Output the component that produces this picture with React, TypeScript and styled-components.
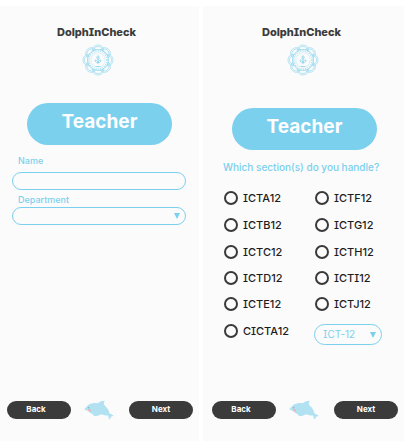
import React from "react";
import styled, { createGlobalStyle } from "styled-components";

const blue = "#7bd0ed";
const ink = "#3b3b3b";

const GlobalStyle = createGlobalStyle`
  *, *::before, *::after { box-sizing: border-box; }
  body {
    margin: 0;
    background: #fff;
    font-family: Inter, "Liberation Sans", sans-serif;
    font-feature-settings: "cv08" 1;
  }
  button, input, select { font: inherit; font-feature-settings: inherit; }
`;

const Board = styled.main`
  display: grid;
  grid-template-columns: minmax(0, 199fr) minmax(0, 201fr);
  column-gap: 4px;
  min-height: 100vh;
  padding: 6px 7px 5px 0;
`;

const Screen = styled.section<{ $inset?: number }>`
  display: flex;
  flex-direction: column;
  padding-left: ${(p) => p.$inset ?? 0}px;
  background: #fbfbfb;
`;

const Header = styled.header`
  display: flex;
  flex-direction: column;
  align-items: center;
  padding: 19px 6px 0 0;
`;

const Brand = styled.h1`
  margin: 0;
  color: ${ink};
  font-size: 11px;
  line-height: 15px;
  font-weight: 800;
`;

const SealSvg = styled.svg`
  width: 32px;
  height: 32px;
  margin: 4px 0 0 2px;
`;

const RoleButton = styled.button<{ $top: number }>`
  align-self: center;
  width: 73%;
  height: 42px;
  margin-top: ${(p) => p.$top}px;
  padding: 0 0 4px;
  border: 0;
  border-radius: 21px;
  background: ${blue};
  color: #fff;
  font-size: 19px;
  line-height: 24px;
  font-weight: 700;
`;

const Form = styled.form`
  display: flex;
  flex-direction: column;
  padding: 10px 13px 0 12px;
`;

const FieldLabel = styled.label`
  padding-left: 6px;
  color: ${blue};
  font-size: 9px;
  line-height: 12px;
  font-weight: 500;
`;

const TextInput = styled.input`
  width: 100%;
  height: 18px;
  margin: 5px 0 4px;
  padding: 0 10px;
  border: 1px solid ${blue};
  border-radius: 9px;
  background: transparent;
  color: ${blue};
  font-size: 9px;
`;

const SelectWrap = styled.div<{ $height: number }>`
  display: grid;
  align-items: center;
  height: ${(p) => p.$height}px;
  margin-top: 1px;

  > * { grid-area: 1 / 1; }
`;

const Select = styled.select`
  appearance: none;
  width: 100%;
  height: 100%;
  padding: 0 18px 2px 8px;
  border: 1px solid ${blue};
  border-radius: 11px;
  background: transparent;
  color: ${blue};
  font-size: 10px;
`;

const Arrow = styled.svg`
  justify-self: end;
  width: 6px;
  height: 6px;
  margin-right: 6px;
  fill: ${blue};
  pointer-events: none;
`;

const Sections = styled.fieldset`
  margin: 0;
  padding: 10px 14px 0 18px;
  border: 0;
  min-width: 0;
`;

const Question = styled.legend`
  float: left;
  width: 100%;
  padding: 0;
  color: ${blue};
  font-size: 10px;
  line-height: 15px;
  font-weight: 500;
  white-space: nowrap;
`;

const Choices = styled.div`
  clear: both;
  display: grid;
  grid-template-columns: 91fr 76fr;
  grid-template-rows: 27px 27px 27px 26px 26px 27px;
  align-items: center;
  padding-top: 9px;
`;

const Choice = styled.label`
  display: flex;
  align-items: center;
  gap: 5px;
  padding-left: 1px;
  color: #1d1d1d;
  font-size: 11px;
  line-height: 14px;
  font-weight: 500;
`;

const Radio = styled.input`
  appearance: none;
  flex: none;
  width: 14px;
  height: 14px;
  margin: 0;
  border: 2px solid #3a3a3a;
  border-radius: 50%;

  &:checked { background: radial-gradient(#3a3a3a 3px, transparent 4px); }
`;

const StrandPicker = styled.div`
  align-self: start;
  padding: 6px 8px 0 0;
`;

const Footer = styled.footer`
  display: flex;
  align-items: center;
  justify-content: space-between;
  margin-top: auto;
  padding: 0 6px 21px 7px;
`;

const NavButton = styled.button<{ $shift?: number }>`
  width: 64px;
  height: 18px;
  padding: 0 ${(p) => p.$shift ?? 0}px 2px 0;
  border: 0;
  border-radius: 9px;
  background: ${ink};
  color: #fff;
  font-size: 8px;
  line-height: 12px;
  font-weight: 700;
`;

const DolphinSvg = styled.svg`
  width: 30px;
  height: 20px;
  margin-right: 2px;
`;

const petals = Array.from({ length: 8 }, (_, i) => i * 45);

function Seal() {
  return (
    <SealSvg viewBox="0 0 32 32" fill="none" stroke={blue} aria-hidden="true">
      <g strokeWidth=".8" opacity=".65">
        {petals.map((a) => (
          <g key={a} transform={`rotate(${a} 16 16)`}>
            <ellipse cx="16" cy="6.2" rx="5.7" ry="5.2" />
            <ellipse cx="16" cy="7" rx="4.8" ry="4.6" />
          </g>
        ))}
      </g>
      <circle cx="16" cy="16" r="10.5" fill="#fbfbfb" strokeWidth=".7" />
      <circle cx="16" cy="16" r="9" strokeWidth="1.5" strokeDasharray="1 1.2" opacity=".6" />
      <circle cx="16" cy="16" r="7.2" strokeWidth=".5" opacity=".5" />
      <path
        d="M16 12v7.5M16 19c-2-.2-3-1.4-3-3 2 .2 3 1.4 3 3Zm0 0c2-.2 3-1.4 3-3-2 .2-3 1.4-3 3ZM16 15.500c-1.500-1-1.500-2.700 0-4 1.500 1.300 1.500 3 0 4ZM13.500 22.500h5"
        strokeWidth=".8"
        opacity=".85"
      />
    </SealSvg>
  );
}

function Dolphin() {
  return (
    <DolphinSvg viewBox="0 0 30 20" aria-hidden="true">
      <path
        d="M.3 9C1.800 8.200 2.600 6 5 4.600C7.500 3.200 10.500 2.800 14 3.200C15.300 1.500 17.500.6 20.800.7C19.700 2.200 19.800 3.700 20.400 5.200C23.500 7.700 25 10.500 25.700 13.700C27.200 13.900 28.800 14.700 29.700 16C28.600 16 27.600 16.300 26.800 17C26.700 18 26.200 19 25.200 19.400C24.500 18 24.500 16.800 24.100 15.600C22 15.700 19.500 15 17 14.300C15 15.700 12.500 16.300 10 16C9.500 15.300 9 14.700 8.500 14C6.500 13.500 5 12.200 4.300 10.800C3 10.700 1 10.300.3 9Z"
        fill="#b2e2f2"
      />
      <circle cx="4.6" cy="7.7" r=".8" fill="#7fb0c8" />
      <ellipse cx="5.5" cy="10.2" rx="1.4" ry="1.2" fill="#efb4b2" />
    </DolphinSvg>
  );
}

function DropDown({ id, label, height, options }: { id: string; label?: string; height: number; options: string[] }) {
  return (
    <SelectWrap $height={height}>
      <Select id={id} aria-label={label}>
        {options.map((o) => (
          <option key={o}>{o}</option>
        ))}
      </Select>
      <Arrow viewBox="0 0 6 6" aria-hidden="true">
        <path d="M0 0h6L3 6Z" />
      </Arrow>
    </SelectWrap>
  );
}

function ScreenHeader() {
  return (
    <Header>
      <Brand>DolphInCheck</Brand>
      <Seal />
    </Header>
  );
}

function ScreenFooter() {
  return (
    <Footer>
      <NavButton type="button" $shift={6}>Back</NavButton>
      <Dolphin />
      <NavButton type="button">Next</NavButton>
    </Footer>
  );
}

const rows = [
  ["ICTA12", "ICTF12"],
  ["ICTB12", "ICTG12"],
  ["ICTC12", "ICTH12"],
  ["ICTD12", "ICTI12"],
  ["ICTE12", "ICTJ12"],
  ["CICTA12"],
];

export default function App() {
  return (
    <>
      <GlobalStyle />
      <Board>
        <Screen>
          <ScreenHeader />
          <RoleButton type="button" $top={27}>Teacher</RoleButton>
          <Form>
            <FieldLabel htmlFor="name">Name</FieldLabel>
            <TextInput id="name" type="text" />
            <FieldLabel htmlFor="department">Department</FieldLabel>
            <DropDown id="department" height={18} options={[""]} />
          </Form>
          <ScreenFooter />
        </Screen>
        <Screen $inset={2}>
          <ScreenHeader />
          <RoleButton type="button" $top={32}>Teacher</RoleButton>
          <Sections>
            <Question>Which section(s) do you handle?</Question>
            <Choices>
              {rows.flat().map((name) => (
                <Choice key={name}>
                  <Radio type="radio" name={name} value={name} />
                  {name}
                </Choice>
              ))}
              <StrandPicker>
                <DropDown id="strand" label="Strand" height={21} options={["ICT-12"]} />
              </StrandPicker>
            </Choices>
          </Sections>
          <ScreenFooter />
        </Screen>
      </Board>
    </>
  );
}
